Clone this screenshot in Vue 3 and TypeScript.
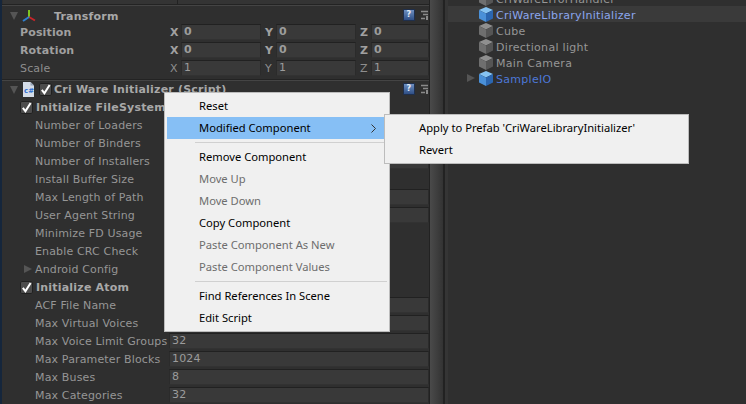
<script setup lang="ts">
interface PropRow {
  label: string;
  value?: string;
  field?: boolean;
}

interface MenuEntry {
  label?: string;
  disabled?: boolean;
  active?: boolean;
  sep?: boolean;
}

const transformRows = [
  { label: "Position", bold: true, vals: ["0", "0", "0"] },
  { label: "Rotation", bold: true, vals: ["0", "0", "0"] },
  { label: "Scale", bold: false, vals: ["1", "1", "1"] },
];
const axes = ["X", "Y", "Z"];

const fileRows: PropRow[] = [
  { label: "Number of Loaders", field: true },
  { label: "Number of Binders", field: true },
  { label: "Number of Installers", field: true },
  { label: "Install Buffer Size" },
  { label: "Max Length of Path", field: true },
  { label: "User Agent String", field: true },
  { label: "Minimize FD Usage" },
  { label: "Enable CRC Check" },
];

const atomRows: PropRow[] = [
  { label: "ACF File Name", field: true },
  { label: "Max Virtual Voices", field: true },
  { label: "Max Voice Limit Groups", field: true, value: "32" },
  { label: "Max Parameter Blocks", field: true, value: "1024" },
  { label: "Max Buses", field: true, value: "8" },
  { label: "Max Categories", field: true, value: "32" },
];

const menu: MenuEntry[] = [
  { label: "Reset" },
  { label: "Modified Component", active: true },
  { sep: true },
  { label: "Remove Component" },
  { label: "Move Up", disabled: true },
  { label: "Move Down", disabled: true },
  { label: "Copy Component" },
  { label: "Paste Component As New", disabled: true },
  { label: "Paste Component Values", disabled: true },
  { sep: true },
  { label: "Find References In Scene" },
  { label: "Edit Script" },
];

const hierarchy = [
  { name: "CriWareErrorHandler", prefab: false },
  { name: "CriWareLibraryInitializer", prefab: true, selected: true },
  { name: "Cube", prefab: false },
  { name: "Directional light", prefab: false },
  { name: "Main Camera", prefab: false },
  { name: "SampleIO", prefab: true, arrow: true },
];
</script>

<template>
  <div class="editor">
    <div class="strip"></div>

    <section class="inspector">
      <div class="stub"><span class="stub-cell"></span></div>
      <div class="rule"></div>

      <header class="comp-head transform-head">
        <span class="tri-down"></span>
        <svg class="axes" width="14" height="14" viewBox="0 0 14 14">
          <path d="M7 8V1" stroke="#7fc41f" stroke-width="2" fill="none" />
          <path d="M7 8l6 3.500" stroke="#c8252a" stroke-width="2" fill="none" />
          <path d="M7 8l-6 4" stroke="#2f7fd0" stroke-width="2" fill="none" />
        </svg>
        <span class="comp-title transform-title">Transform</span>
        <span class="head-tools">
          <span class="help">?</span>
          <svg width="8" height="11" viewBox="0 0 8 11">
            <path d="M0 1.500h7M2 4.500h5M0 8.500h4" stroke="#8a8a8a" stroke-width="1.500" fill="none" />
            <rect x="5" y="6" width="2" height="4" fill="#8a8a8a" />
          </svg>
        </span>
      </header>

      <div v-for="row in transformRows" :key="row.label" class="row vec-row" :class="{ strong: row.bold }">
        <span class="vec-label">{{ row.label }}</span>
        <div v-for="(val, i) in row.vals" :key="i" class="vec-cell">
          <span class="axis">{{ axes[i] }}</span>
          <span class="field">{{ val }}</span>
        </div>
      </div>

      <div class="rule rule-low"></div>

      <header class="comp-head script-head">
        <span class="tri-down"></span>
        <svg class="file" width="11" height="15" viewBox="0 0 11 15">
          <path d="M0 0h7.500L11 3.500V15H0z" fill="#d5dde8" />
          <path d="M7.500 0v3.500H11z" fill="#96a3b5" />
          <text x="1" y="10.500" font-size="7" font-weight="700" fill="#2f6fd0" font-family="'DejaVu Sans', sans-serif">c#</text>
        </svg>
        <span class="check">
          <svg width="11" height="11" viewBox="0 0 12 12"><path d="M2 6.500l2.800 3.500L10.500 1" stroke="#fff" stroke-width="2.200" fill="none" /></svg>
        </span>
        <span class="comp-title">Cri Ware Initializer (Script)</span>
        <span class="head-tools">
          <span class="help">?</span>
          <svg width="8" height="11" viewBox="0 0 8 11">
            <path d="M0 1.500h7M2 4.500h5M0 8.500h4" stroke="#8a8a8a" stroke-width="1.500" fill="none" />
            <rect x="5" y="6" width="2" height="4" fill="#8a8a8a" />
          </svg>
        </span>
      </header>

      <div class="row group-row">
        <span class="check">
          <svg width="11" height="11" viewBox="0 0 12 12"><path d="M2 6.500l2.800 3.500L10.500 1" stroke="#fff" stroke-width="2.200" fill="none" /></svg>
        </span>
        <span class="group-title">Initialize FileSystem</span>
      </div>
      <div v-for="row in fileRows" :key="row.label" class="row prop-row">
        <span class="prop-label">{{ row.label }}</span>
        <span v-if="row.field" class="field">{{ row.value }}</span>
      </div>

      <div class="row foldout-row">
        <span class="tri-right"></span>
        <span>Android Config</span>
      </div>

      <div class="row group-row">
        <span class="check">
          <svg width="11" height="11" viewBox="0 0 12 12"><path d="M2 6.500l2.800 3.500L10.500 1" stroke="#fff" stroke-width="2.200" fill="none" /></svg>
        </span>
        <span class="group-title">Initialize Atom</span>
      </div>
      <div v-for="row in atomRows" :key="row.label" class="row prop-row">
        <span class="prop-label">{{ row.label }}</span>
        <span v-if="row.field" class="field">{{ row.value }}</span>
      </div>
    </section>

    <div class="scrollbar"></div>
    <div class="gutter"></div>

    <section class="hierarchy">
      <div v-for="item in hierarchy" :key="item.name" class="node" :class="{ selected: item.selected, prefab: item.prefab }">
        <span class="node-arrow"><span v-if="item.arrow" class="tri-right"></span></span>
        <svg class="cube" width="14" height="15" viewBox="0 0 14 15">
          <path d="M7 0l7 3-7 3.500L0 3z" :fill="item.prefab ? '#86c3f2' : '#8f8f8f'" />
          <path d="M0 3l7 3.500V15l-7-3.500z" :fill="item.prefab ? '#4a90d8' : '#6f6f6f'" />
          <path d="M14 3L7 6.500V15l7-3.500z" :fill="item.prefab ? '#2b66b0' : '#555555'" />
        </svg>
        <span class="node-name">{{ item.name }}</span>
      </div>
    </section>

    <div class="menu">
      <template v-for="(entry, i) in menu" :key="i">
        <div v-if="entry.sep" class="menu-sep"></div>
        <div v-else class="menu-item" :class="{ disabled: entry.disabled, active: entry.active }">
          {{ entry.label }}
          <svg v-if="entry.active" class="chevron" width="5" height="9" viewBox="0 0 5 9">
            <path d="M0.500 0.500l4 4-4 4" stroke="#333333" fill="none" />
          </svg>
        </div>
      </template>

      <div class="menu submenu">
        <div class="menu-item">Apply to Prefab 'CriWareLibraryInitializer'</div>
        <div class="menu-item">Revert</div>
      </div>
    </div>
  </div>
</template>

<style scoped>
.editor {
  position: relative;
  display: flex;
  width: 746px;
  height: 404px;
  overflow: hidden;
  background: #2f2f2f;
  color: #969696;
  font-family: "DejaVu Sans", sans-serif;
  font-size: 11px;
  letter-spacing: 0.15px;
}

.strip {
  width: 2px;
  background: #15263c;
}

.inspector {
  width: 427px;
  flex: none;
  padding-left: 1px;
  box-sizing: border-box;
}

.stub {
  height: 4px;
  background: #343434;
  padding-left: 174px;
  box-sizing: border-box;
}

.stub-cell {
  display: block;
  width: 1px;
  height: 4px;
  background: #222;
}

.rule {
  height: 2px;
  margin-left: -1px;
  background: #444;
  border-top: 1px solid #232323;
  box-sizing: border-box;
}

.rule-low {
  margin-top: 2px;
}

.comp-head {
  position: relative;
  display: flex;
  align-items: center;
  height: 17px;
  box-sizing: border-box;
  padding-left: 7px;
  font-weight: 700;
}

.transform-head {
  padding-top: 3px;
}

.tri-down {
  width: 0;
  height: 0;
  border-left: 4px solid transparent;
  border-right: 4px solid transparent;
  border-top: 8px solid #555;
}

.tri-right {
  display: inline-block;
  width: 0;
  height: 0;
  border-top: 4px solid transparent;
  border-bottom: 4px solid transparent;
  border-left: 8px solid #555;
}

.axes {
  margin-left: 4px;
}

.comp-title {
  color: #a8a8a8;
  letter-spacing: 0.2px;
}

.transform-title {
  margin-left: 18px;
}

.file {
  margin-left: 5px;
  flex: none;
}

.check {
  display: inline-flex;
  align-items: center;
  justify-content: center;
  width: 13px;
  height: 13px;
  flex: none;
  background: #4c4c4c;
  border-radius: 2px;
  box-shadow: inset 0 0 0 1px #202020;
}

.script-head .check {
  margin-left: 5px;
  margin-right: 2px;
}

.head-tools {
  position: absolute;
  right: 0;
  top: 2px;
  display: flex;
  align-items: center;
  gap: 6px;
}

.transform-head .head-tools {
  top: 3px;
}

.help {
  display: block;
  width: 12px;
  height: 12px;
  background: linear-gradient(#6d8fc0, #2f4f86);
  border: 1px solid #1f2f4c;
  box-sizing: border-box;
  color: #e6ecf5;
  font-size: 8px;
  line-height: 10px;
  text-align: center;
}

.row {
  display: flex;
  align-items: center;
  height: 18px;
}

.vec-row {
  padding-left: 17px;
  color: #8e8e8e;
}

.vec-row.strong {
  font-weight: 700;
  color: #a0a0a0;
}

.vec-label {
  width: 150px;
  flex: none;
}

.vec-cell {
  display: flex;
  align-items: center;
  flex: 1;
}

.vec-cell:nth-of-type(1),
.vec-cell:nth-of-type(2) {
  flex: none;
  width: 95px;
  padding-right: 4px;
  box-sizing: border-box;
}

.axis {
  width: 11px;
  flex: none;
}

.field {
  display: block;
  flex: 1;
  height: 16px;
  padding-left: 2px;
  box-sizing: border-box;
  background: #393939;
  border: 1px solid #2b2b2b;
  border-top-color: #212121;
  border-bottom-color: #323232;
  color: #9c9c9c;
  font-weight: 400;
  line-height: 14px;
}

.vec-row.strong .field {
  font-weight: 700;
}

.group-row {
  padding-left: 17px;
}

.group-title {
  margin-left: 3px;
  font-weight: 700;
  color: #a8a8a8;
  letter-spacing: 0.2px;
}

.prop-row {
  padding-left: 32px;
}

.prop-label {
  width: 134px;
  flex: none;
  white-space: nowrap;
}

.foldout-row {
  padding-left: 21px;
  gap: 3px;
}

.scrollbar {
  width: 14px;
  flex: none;
  background: linear-gradient(90deg, #222 0 1px, #4a4a4a 1px, #333);
}

.gutter {
  width: 5px;
  flex: none;
  background: linear-gradient(90deg, #222 0 2px, #353535 2px);
}

.hierarchy {
  flex: 1;
  margin-top: -10px;
  letter-spacing: 0.3px;
}

.node {
  display: flex;
  align-items: center;
  height: 16px;
  padding-left: 19px;
}

.node.selected {
  background: #3a3a3a;
}

.node-arrow {
  display: flex;
  align-items: center;
  width: 12px;
  flex: none;
}

.cube {
  flex: none;
}

.node-name {
  margin-left: 3px;
  padding-top: 2px;
}

.node.prefab .node-name {
  color: #4d78d8;
}

.node.selected .node-name {
  color: #8ba6ee;
}

.menu {
  position: absolute;
  left: 164px;
  top: 92px;
  width: 226px;
  height: 240px;
  padding: 2px;
  box-sizing: border-box;
  background: #f0f0f0;
  border: 1px solid #bcbcbc;
  color: #000;
  font-family: "Noto Sans", sans-serif;
  font-size: 11.2px;
  letter-spacing: 0;
}

.menu-item {
  position: relative;
  height: 22px;
  padding-left: 32px;
  line-height: 21px;
  white-space: nowrap;
}

.menu-item.disabled {
  color: #6d6d6d;
}

.menu-item.active {
  background: #86bff5;
}

.chevron {
  position: absolute;
  right: 11px;
  top: 7px;
}

.menu-sep {
  height: 1px;
  margin: 3px 0 3px 28px;
  background: #d0d0d0;
}

.submenu {
  left: 219px;
  top: 21px;
  width: 305px;
  height: 50px;
}
</style>

<style>
html,
body {
  margin: 0;
  background: #2f2f2f;
}
</style>
